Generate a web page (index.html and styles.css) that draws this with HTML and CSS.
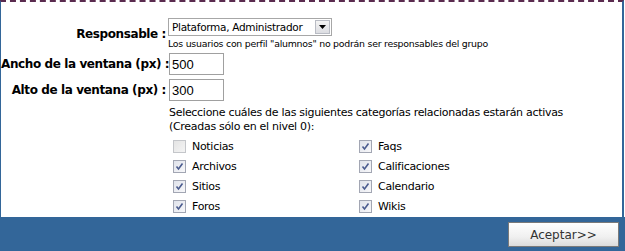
FILE: index.html
```html
<!DOCTYPE html>
<html>
<head>
  <title>Grupo</title>
  <link rel="stylesheet" href="styles.css">
</head>
<body>
  <div class="panel">
    <div class="form-grid">
      <div class="label">Responsable :</div>
      <div class="field">
        <div class="select">
          <span class="select-text">Plataforma, Administrador</span>
          <span class="select-btn">
            <svg width="7" height="4" viewBox="0 0 7 4"><path d="M0 0h7L3.5 4z" fill="#000"/></svg>
          </span>
        </div>
        <div class="help">Los usuarios con perfil "alumnos" no podrán ser responsables del grupo</div>
      </div>

      <div class="label">Ancho de la ventana (px) :</div>
      <div class="field"><input class="text-input" type="text" value="500"></div>

      <div class="label">Alto de la ventana (px) :</div>
      <div class="field"><input class="text-input" type="text" value="300"></div>

      <div></div>
      <div class="field">
        <p class="intro">Seleccione cuáles de las siguientes categorías relacionadas estarán activas<br>(Creadas sólo en el nivel 0):</p>
        <div class="checks">
          <label class="check"><span class="box off"></span>Noticias</label>
          <label class="check"><span class="box"><svg width="9" height="9" viewBox="0 0 9 9"><path d="M1.5 4.5l2 2.5L7.5 1.5" fill="none" stroke="#4b5c8f" stroke-width="1.6"/></svg></span>Faqs</label>
          <label class="check"><span class="box"><svg width="9" height="9" viewBox="0 0 9 9"><path d="M1.5 4.5l2 2.5L7.5 1.5" fill="none" stroke="#4b5c8f" stroke-width="1.6"/></svg></span>Archivos</label>
          <label class="check"><span class="box"><svg width="9" height="9" viewBox="0 0 9 9"><path d="M1.5 4.5l2 2.5L7.5 1.5" fill="none" stroke="#4b5c8f" stroke-width="1.6"/></svg></span>Calificaciones</label>
          <label class="check"><span class="box"><svg width="9" height="9" viewBox="0 0 9 9"><path d="M1.5 4.5l2 2.5L7.5 1.5" fill="none" stroke="#4b5c8f" stroke-width="1.6"/></svg></span>Sitios</label>
          <label class="check"><span class="box"><svg width="9" height="9" viewBox="0 0 9 9"><path d="M1.5 4.5l2 2.5L7.5 1.5" fill="none" stroke="#4b5c8f" stroke-width="1.6"/></svg></span>Calendario</label>
          <label class="check"><span class="box"><svg width="9" height="9" viewBox="0 0 9 9"><path d="M1.5 4.5l2 2.5L7.5 1.5" fill="none" stroke="#4b5c8f" stroke-width="1.6"/></svg></span>Foros</label>
          <label class="check"><span class="box"><svg width="9" height="9" viewBox="0 0 9 9"><path d="M1.5 4.5l2 2.5L7.5 1.5" fill="none" stroke="#4b5c8f" stroke-width="1.6"/></svg></span>Wikis</label>
        </div>
      </div>
    </div>
  </div>
  <div class="footer">
    <button class="btn" type="button">Aceptar&gt;&gt;</button>
  </div>
</body>
</html>
```

FILE: styles.css
```css
body {
  margin: 0;
  font-family: "DejaVu Sans", Verdana, sans-serif;
  color: #000;
  background: #fff;
}

.panel {
  height: 215px;
  border-top: 2px dashed #5a2b4f;
  border-left: 1px solid #336699;
  border-right: 2px solid #336699;
  margin-right: 1px;
}

.form-grid {
  display: grid;
  grid-template-columns: 165px 1fr;
  column-gap: 2px;
  row-gap: 4px;
  padding-top: 16px;
  align-items: center;
}

.label {
  text-align: right;
  font-weight: bold;
  font-size: 12px;
  white-space: nowrap;
  letter-spacing: -0.4px;
}

.select {
  display: flex;
  align-items: center;
  width: 162px;
  height: 16px;
  border: 1px solid #a7a7a7;
  font-size: 10.5px;
  letter-spacing: -0.3px;
}

.select-text {
  flex: 1;
  padding-left: 3px;
}

.select-btn {
  display: flex;
  align-items: center;
  justify-content: center;
  width: 15px;
  height: 14px;
  margin-right: 1px;
  border: 1px solid #b9bcc4;
  background: linear-gradient(#f4f4f4, #dcdde2);
  box-sizing: border-box;
}

.help {
  font-size: 9.4px;
  margin-top: 2px;
  letter-spacing: -0.25px;
}

.text-input {
  width: 55px;
  height: 22px;
  box-sizing: border-box;
  margin: 0 0 0 1px;
  padding: 0 2px;
  border: 1px solid #a0a0a0;
  font-family: "Liberation Sans", Arial, sans-serif;
  font-size: 13px;
}

.intro {
  margin: 1px 0 0 1px;
  font-size: 11px;
  line-height: 14px;
  letter-spacing: -0.3px;
}

.checks {
  display: grid;
  grid-template-columns: 186px 1fr;
  grid-auto-rows: 20px;
  padding: 2px 0 0 5px;
  font-size: 11px;
  letter-spacing: -0.3px;
}

.check {
  display: flex;
  align-items: center;
}

.box {
  display: flex;
  align-items: center;
  justify-content: center;
  width: 13px;
  height: 13px;
  box-sizing: border-box;
  margin-right: 6px;
  border: 1px solid #a2a6b3;
  background: linear-gradient(135deg, #dfe2ea, #f8f8fa);
}

.box.off {
  border-color: #c4c6ca;
  background: linear-gradient(135deg, #e4e4e4, #f4f4f4);
}

.footer {
  height: 34px;
  background: #336699;
  display: flex;
  justify-content: flex-end;
  align-items: flex-start;
  padding-right: 6px;
}

.btn {
  margin-top: 5px;
  width: 111px;
  height: 25px;
  border: 1px solid #7a7a7a;
  background: linear-gradient(#ffffff, #f0f0f0 60%, #dcdcdc);
  font-family: "DejaVu Sans", Verdana, sans-serif;
  font-size: 12px;
  color: #333;
}
```
